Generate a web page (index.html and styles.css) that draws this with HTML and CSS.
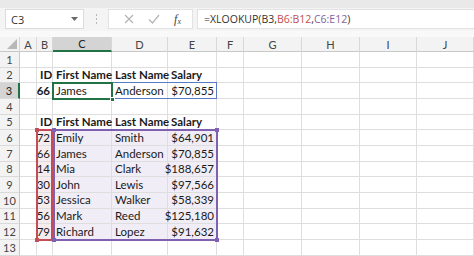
FILE: index.html
```html
<!DOCTYPE html>
<html>
<head>
<meta charset="utf-8">
<link rel="stylesheet" href="styles.css">
</head>
<body>
<div class="app">
  <div class="fbar">
    <div class="namebox"><span>C3</span><svg class="dd" width="7" height="4" viewBox="0 0 7 4"><path d="M0 0h7L3.5 4z" fill="#6a6a6a"/></svg></div>
    <div class="grip"><i></i><i></i><i></i></div>
    <div class="icons">
      <svg width="10" height="10" viewBox="0 0 10 10"><path d="M1 1l8 8M9 1l-8 8" stroke="#b4b4b4" stroke-width="1.2"/></svg>
      <svg width="12" height="10" viewBox="0 0 12 10"><path d="M1 5.5l3.5 3.5L11 1" stroke="#b4b4b4" stroke-width="1.2" fill="none"/></svg>
      <span class="fx">f<sub>x</sub></span>
    </div>
    <div class="formula">=XLOOKUP(B3,<span class="r">B6:B12</span>,<span class="p">C6:E12</span>)</div>
  </div>
  <div class="sheet">
    <div class="h corner"><svg width="10" height="10" viewBox="0 0 10 10"><path d="M10 0v10H0z" fill="#b8b8b8"/></svg></div>
    <div class="h">A</div><div class="h">B</div><div class="h hsel">C</div><div class="h">D</div><div class="h">E</div><div class="h">F</div><div class="h">G</div><div class="h">H</div><div class="h">I</div><div class="h">J</div>

    <div class="rh">1</div><div class="c"></div><div class="c"></div><div class="c"></div><div class="c"></div><div class="c"></div><div class="c"></div><div class="c"></div><div class="c"></div><div class="c"></div><div class="c"></div>

    <div class="rh">2</div><div class="c"></div><div class="c b">ID</div><div class="c b">First Name</div><div class="c b">Last Name</div><div class="c b">Salary</div><div class="c"></div><div class="c"></div><div class="c"></div><div class="c"></div><div class="c"></div>

    <div class="rh rsel">3</div><div class="c"></div><div class="c b n">66</div><div class="c">James</div><div class="c">Anderson</div><div class="c n">$70,855</div><div class="c"></div><div class="c"></div><div class="c"></div><div class="c"></div><div class="c"></div>

    <div class="rh">4</div><div class="c"></div><div class="c"></div><div class="c"></div><div class="c"></div><div class="c"></div><div class="c"></div><div class="c"></div><div class="c"></div><div class="c"></div><div class="c"></div>

    <div class="rh">5</div><div class="c"></div><div class="c b">ID</div><div class="c b">First Name</div><div class="c b">Last Name</div><div class="c b">Salary</div><div class="c"></div><div class="c"></div><div class="c"></div><div class="c"></div><div class="c"></div>

    <div class="rh">6</div><div class="c"></div><div class="c n pk">72</div><div class="c lv">Emily</div><div class="c lv">Smith</div><div class="c n lv">$64,901</div><div class="c"></div><div class="c"></div><div class="c"></div><div class="c"></div><div class="c"></div>

    <div class="rh">7</div><div class="c"></div><div class="c n pk">66</div><div class="c lv">James</div><div class="c lv">Anderson</div><div class="c n lv">$70,855</div><div class="c"></div><div class="c"></div><div class="c"></div><div class="c"></div><div class="c"></div>

    <div class="rh">8</div><div class="c"></div><div class="c n pk">14</div><div class="c lv">Mia</div><div class="c lv">Clark</div><div class="c n lv">$188,657</div><div class="c"></div><div class="c"></div><div class="c"></div><div class="c"></div><div class="c"></div>

    <div class="rh">9</div><div class="c"></div><div class="c n pk">30</div><div class="c lv">John</div><div class="c lv">Lewis</div><div class="c n lv">$97,566</div><div class="c"></div><div class="c"></div><div class="c"></div><div class="c"></div><div class="c"></div>

    <div class="rh">10</div><div class="c"></div><div class="c n pk">53</div><div class="c lv">Jessica</div><div class="c lv">Walker</div><div class="c n lv">$58,339</div><div class="c"></div><div class="c"></div><div class="c"></div><div class="c"></div><div class="c"></div>

    <div class="rh">11</div><div class="c"></div><div class="c n pk">56</div><div class="c lv">Mark</div><div class="c lv">Reed</div><div class="c n lv">$125,180</div><div class="c"></div><div class="c"></div><div class="c"></div><div class="c"></div><div class="c"></div>

    <div class="rh">12</div><div class="c"></div><div class="c n pk">79</div><div class="c lv">Richard</div><div class="c lv">Lopez</div><div class="c n lv">$91,632</div><div class="c"></div><div class="c"></div><div class="c"></div><div class="c"></div><div class="c"></div>

    <div class="rh">13</div><div class="c"></div><div class="c"></div><div class="c"></div><div class="c"></div><div class="c"></div><div class="c"></div><div class="c"></div><div class="c"></div><div class="c"></div><div class="c"></div>

    <div class="ov spill"></div>
    <div class="ov red"><i class="k tl"></i><i class="k bl"></i></div>
    <div class="ov pur"><i class="k tl"></i><i class="k tr"></i><i class="k bl"></i><i class="k br"></i></div>
    <div class="ov sel"><i class="k fh"></i></div>
  </div>
</div>
</body>
</html>
```
FILE: styles.css
```css
* { box-sizing: border-box; }
html, body { margin: 0; padding: 0; background: #fff; }
.app { width: 474px; height: 256px; overflow: hidden; font-family: "Lato", "Liberation Sans", sans-serif; }

.fbar {
  height: 37px;
  background: linear-gradient(#e9e9e9 0, #e9e9e9 8px, #f4f4f4 8px, #f4f4f4 31px, #f9f9f9 31px);
  display: flex;
  align-items: flex-start;
  padding-top: 9px;
  padding-left: 5px;
}
.namebox {
  width: 79px; height: 20px; background: #fff;
  border: 1px solid #dcdcdc;
  display: flex; align-items: center; justify-content: space-between;
  padding: 0 5px 0 5px;
  font-family: "Open Sans", "Noto Sans", sans-serif; font-size: 11px; color: #333;
}
.grip { width: 24px; height: 20px; display: flex; flex-direction: column; align-items: center; justify-content: center; gap: 2px; }
.grip i { display: block; width: 1px; height: 2px; background: #b8b8b8; }
.icons {
  width: 85px; height: 20px; background: #fff; border: 1px solid #e2e2e2;
  display: flex; align-items: center; justify-content: space-around; padding: 0 4px 0 8px;
}
.fx { font-family: "Liberation Serif", serif; font-style: italic; font-size: 12px; color: #444; line-height: 1; }
.fx sub { font-size: 8px; vertical-align: -1px; }
.formula {
  flex: 1; margin-left: 4px; height: 20px; background: #fff; border: 1px solid #e2e2e2; border-right: 0;
  font-family: "Open Sans", "Noto Sans", sans-serif; font-size: 10.5px; color: #333;
  line-height: 18px; padding-left: 6px; white-space: nowrap;
}
.formula .r { color: #c0504d; }
.formula .p { color: #8064a2; }

.sheet {
  position: relative;
  display: grid;
  grid-template-columns: 20px 17px 16px 59px 56px 49px 27px 58px 58px 57px 57px;
  grid-template-rows: 15px repeat(13, 15.67px);
  font-size: 11.5px; color: #1a1a1a;
}
.h {
  background: #f3f3f3; border-right: 1px solid #d8d8d8; border-bottom: 1px solid #c8c8c8;
  display: flex; align-items: center; justify-content: center;
  font-size: 11px; color: #444;
}
.h.corner { justify-content: flex-end; align-items: flex-end; padding: 0 2px 2px 0; }
.h.hsel { background: #d4d4d4; border-bottom: 2px solid #217346; color: #222; }
.rh {
  background: #f3f3f3; border-right: 1px solid #c8c8c8; border-bottom: 1px solid #dadada;
  display: flex; align-items: center; justify-content: center;
  font-size: 11px; color: #444;
}
.rh.rsel { background: #d4d4d4; border-right: 2px solid #217346; color: #222; }
.c {
  border-right: 1px solid #dedede; border-bottom: 1px solid #dedede;
  padding: 0 2px 0 3px; white-space: nowrap; overflow: visible;
  display: flex; align-items: center; line-height: 1;
}
.c.b { font-weight: 700; }
.c.n { justify-content: flex-end; }
.c.pk { background: #f7eced; }
.c.lv { background: #f0edf6; }

.ov { position: absolute; inset: 0; pointer-events: none; }
.spill { grid-column: 4 / 7; grid-row: 4 / 5; border: 1px solid #5a7cc4; top: -1px; left: -1px; }
.sel { grid-column: 4 / 5; grid-row: 4 / 5; border: 2px solid #217346; top: -1px; left: -1px; right: -1px; bottom: -1px; }
.red { grid-column: 3 / 4; grid-row: 7 / 14; border: 2px solid #c44b58; top: -1px; left: -1px; right: 0; bottom: -1px; }
.pur { grid-column: 4 / 7; grid-row: 7 / 14; border: 2px solid #8060b0; top: -1px; left: 0; right: -1px; bottom: -1px; }
.k { position: absolute; width: 4px; height: 4px; display: block; }
.red .k { background: #c44b58; }
.pur .k { background: #8060b0; }
.k.tl { top: -3px; left: -3px; }
.k.tr { top: -3px; right: -3px; }
.k.bl { bottom: -3px; left: -3px; }
.k.br { bottom: -3px; right: -3px; }
.k.fh { width: 5px; height: 5px; background: #217346; right: -4px; bottom: -4px; border: 1px solid #fff; box-sizing: content-box; width: 3px; height: 3px; }
```
